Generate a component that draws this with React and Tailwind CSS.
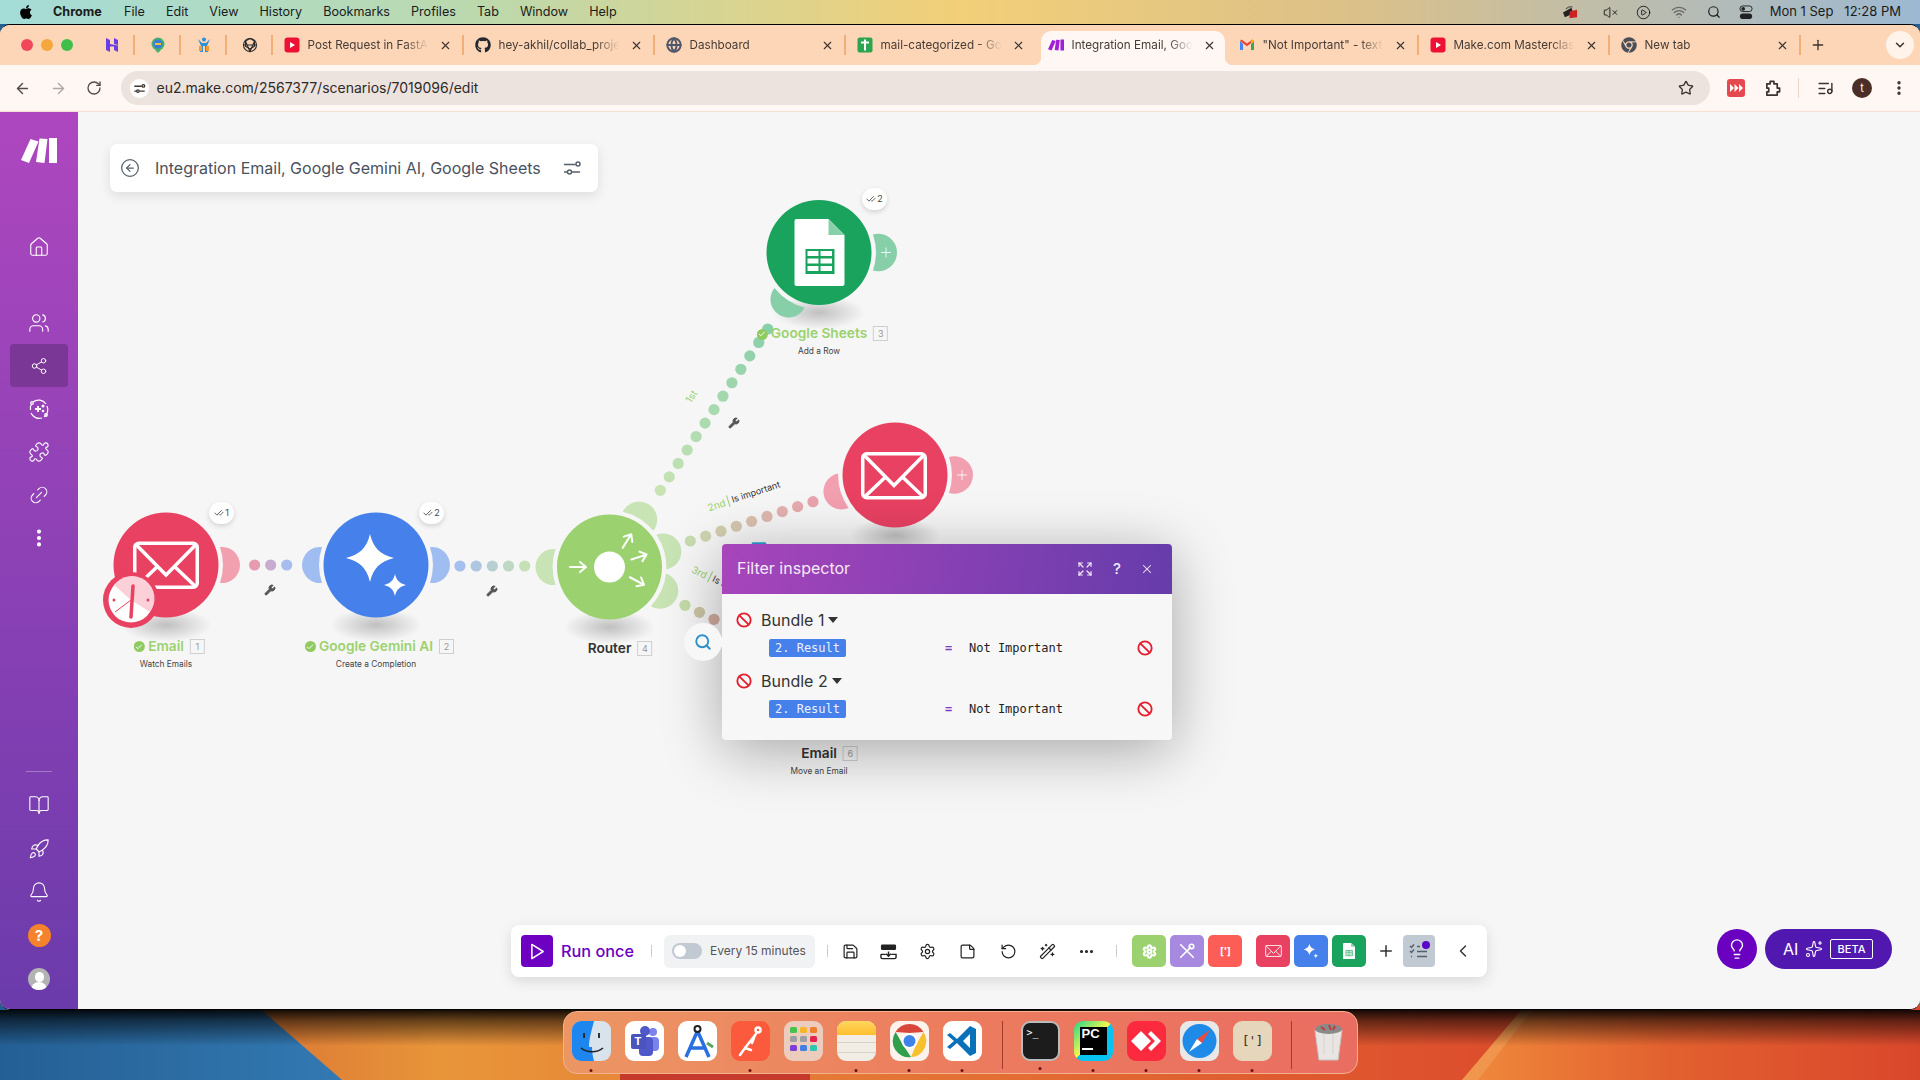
import {
  ArrowLeft, ArrowRight, RotateCw, RotateCcw, Star, Puzzle, ListMusic, EllipsisVertical, X, Plus, ChevronDown, ChevronLeft,
  House, Users, Share2, Link2, BookOpen, Rocket, Bell, CircleArrowLeft, Save, Settings, StickyNote,
  WandSparkles, Ellipsis, Lightbulb, Sparkles, Ban, Search, Expand, CheckCheck, Check, VolumeX, CirclePlay, Wifi,
  Wrench, Funnel, Globe,
} from 'lucide-react';
import { FaApple, FaGithub, FaChrome } from 'react-icons/fa';

const MENU = ['File', 'Edit', 'View', 'History', 'Bookmarks', 'Profiles', 'Tab', 'Window', 'Help'];

function lerp(a, b, t) {
  return a + (b - a) * t;
}

function mix(c1, c2, t) {
  const p = (c, i) => parseInt(c.slice(i, i + 2), 16);
  const ch = (i) => Math.round(lerp(p(c1, i), p(c2, i), t)).toString(16).padStart(2, '0');
  return `#${ch(1)}${ch(3)}${ch(5)}`;
}

/* ---------- small favicons ---------- */

function Yt() {
  return (
    <svg viewBox="0 0 16 16" className="w-4 h-4">
      <rect x="0.5" y="0.5" width="15" height="15" rx="3" fill="#ee1133" />
      <path d="M6 5l5 3-5 3z" fill="#fff" />
    </svg>
  );
}

function SheetFav() {
  return (
    <svg viewBox="0 0 16 16" className="w-4 h-4">
      <rect x="0.5" y="0.5" width="15" height="15" rx="2" fill="#2da44e" />
      <path d="M4 5.5h8M8 2.5v11" stroke="#fff" strokeWidth="2" />
    </svg>
  );
}

function MakeLogo({ className, fill = '#fff' }) {
  return (
    <svg viewBox="0 0 36 25" className={className}>
      <path d="M9.500 1L17.500 3.500 8 25 0 22zM18.500 .5L26.500 1 23.500 25 15 24zM28 0H36V25H28z" fill={fill} />
    </svg>
  );
}

function GmailFav() {
  return (
    <svg viewBox="0 0 16 16" className="w-4 h-4">
      <path d="M1 4v9h3V7z" fill="#4285f4" />
      <path d="M15 4v9h-3V7z" fill="#34a853" />
      <path d="M1 4l7 5.2L15 4l-1.5-1.5L8 6.5 2.5 2.5z" fill="#ea4335" />
      <path d="M12 7l3-3-1.5-1.5L12 4z" fill="#fbbc04" />
    </svg>
  );
}

function TuneIcon({ className, stroke = '#3c332e', width = 1.5 }) {
  return (
    <svg viewBox="0 0 20 20" className={className} fill="none" stroke={stroke} strokeWidth={width}>
      <path d="M2 6.500H13.500M2 14H5" />
      <circle cx="16" cy="6" r="2" />
      <circle cx="7.500" cy="14" r="2" />
      <path d="M10 14H18" />
    </svg>
  );
}

const TABS = [
  { title: 'Post Request in FastAPI', icon: <Yt />, sep: true },
  { title: 'hey-akhil/collab_project', icon: <FaGithub className="w-4 h-4 text-[#24292f]" />, sep: true },
  { title: 'Dashboard', icon: <Globe className="w-4 h-4 text-[#50576a]" strokeWidth={3} />, sep: true },
  { title: 'mail-categorized - Google', icon: <SheetFav />, sep: false },
  { title: 'Integration Email, Google', icon: <MakeLogo className="w-4 h-3" fill="#a020d8" />, sep: false, active: true },
  { title: '"Not Important" - text', icon: <GmailFav />, sep: true },
  { title: 'Make.com Masterclass', icon: <Yt />, sep: true },
  { title: 'New tab', icon: <FaChrome className="w-4 h-4 text-[#4a4f58]" />, sep: true },
];

function BrowserTab({ title, icon, sep, active }) {
  return (
    <div className="relative w-[191px] h-[40px] flex items-center pl-[11px] shrink-0">
      {active && (
        <div className="absolute left-[4px] right-[3px] top-[6px] bottom-0 bg-[#fff7f3] rounded-t-[10px]">
          <div className="absolute -left-[8px] bottom-0 w-2 h-2 bg-[radial-gradient(circle_at_0_0,transparent_8px,#fff7f3_8.5px)]" />
          <div className="absolute -right-[8px] bottom-0 w-2 h-2 bg-[radial-gradient(circle_at_100%_0,transparent_8px,#fff7f3_8.5px)]" />
        </div>
      )}
      <div className="relative w-4 h-4 flex items-center justify-center shrink-0">{icon}</div>
      <div className="relative ml-2 mt-px w-[128px] overflow-hidden whitespace-nowrap text-[11.700px] text-[#463c36] [mask-image:linear-gradient(90deg,#000_76%,transparent_94%)]">
        {title}
      </div>
      <X className="relative ml-[3px] w-[13px] h-[13px] text-[#3c332e] shrink-0" strokeWidth={2} />
      {sep && <div className="absolute right-0 top-[10px] w-[1.5px] h-5 bg-[#f2ae74]" />}
    </div>
  );
}

function MenuBar() {
  return (
    <div className="relative z-10 h-6 shrink-0 flex items-center text-[12.600px] text-[#1b1b1b] bg-[linear-gradient(90deg,#a4dcd8,#bcd9ad_25%,#f2cf78_50%,#dcc188_70%,#9cb8d2)]">
      <FaApple className="ml-[18px] w-[16px] h-[16px] text-black" />
      <span className="ml-[19px] font-bold w-[50px]">Chrome</span>
      <div className="ml-[21px] flex gap-[21px]">
        {MENU.map((m) => (
          <span key={m}>{m}</span>
        ))}
      </div>
      <div className="ml-auto flex items-center pr-[19px]">
        <svg viewBox="0 0 20 16" className="w-[19px] h-[15px] mr-[23px]">
          <path d="M2 8l9-5 2 6-9 4z" fill="#222" />
          <path d="M9 7l8-2v8l-8 1z" fill="#cc2222" />
          <path d="M5 4a8 8 0 0 1 7-2" stroke="#333" fill="none" />
        </svg>
        <VolumeX className="w-[15px] h-[15px] mr-[18px]" strokeWidth={1.5} />
        <CirclePlay className="w-[15px] h-[15px] mr-[20px]" strokeWidth={1.5} />
        <Wifi className="w-[16px] h-[16px] mr-[20px] text-[#666]" strokeWidth={2} />
        <Search className="w-[14px] h-[14px] mr-[18px]" strokeWidth={2} />
        <svg viewBox="0 0 14 16" className="w-[14px] h-[15px] mr-[17px]">
          <rect x="0.5" y="1" width="13" height="6" rx="3" fill="none" stroke="#222" />
          <rect x="0.5" y="9" width="13" height="6" rx="3" fill="#222" />
          <circle cx="4" cy="4" r="2" fill="#222" />
        </svg>
        <span className="whitespace-pre text-[13px]">Mon 1 Sep   12:28 PM</span>
      </div>
    </div>
  );
}

function PinnedTab({ children }) {
  return (
    <div className="relative w-[46px] h-10 flex items-center justify-center shrink-0">
      {children}
      <div className="absolute right-0 top-[10px] w-[1.5px] h-5 bg-[#f2ae74]" />
    </div>
  );
}

function TabStrip() {
  return (
    <div className="h-10 flex bg-[#fdd6b8] relative">
      <div className="w-[88.5px] pl-[21px] flex items-center gap-2 shrink-0">
        <span className="w-3 h-3 rounded-full bg-[#f0485a]" />
        <span className="w-3 h-3 rounded-full bg-[#f6a73c]" />
        <span className="w-3 h-3 rounded-full bg-[#3fbf4a]" />
      </div>
      <PinnedTab>
        <svg viewBox="0 0 16 16" className="w-4 h-4">
          <path d="M2 1l4 2v4h4V1l4 2v5l-4-1-0 0H6l8 1.5V15l-4-2V9.5H6V15l-4-2z" fill="#6b3fe0" />
        </svg>
      </PinnedTab>
      <PinnedTab>
        <svg viewBox="0 0 16 16" className="w-4 h-4">
          <circle cx="8" cy="7" r="6.5" fill="#46b06c" />
          <circle cx="8" cy="7" r="4.5" fill="#3d7bd6" />
          <rect x="5" y="6" width="6" height="2" fill="#f0c040" />
          <path d="M5 13l3 3 3-3z" fill="#46b06c" />
        </svg>
      </PinnedTab>
      <PinnedTab>
        <svg viewBox="0 0 16 16" className="w-4 h-4">
          <circle cx="8" cy="2.5" r="2" fill="#2d8fd5" />
          <path d="M2 2l4 4h4l4-4-3 7 1 6H9V9H7v6H4l1-6z" fill="#2d8fd5" />
          <rect x="3" y="9" width="3" height="5" fill="#f39c32" />
          <rect x="10" y="9" width="3" height="5" fill="#f39c32" />
        </svg>
      </PinnedTab>
      <PinnedTab>
        <svg viewBox="0 0 16 16" className="w-4 h-4" fill="none" stroke="#2a2a2a" strokeWidth="1.1">
          <circle cx="8" cy="8" r="6.5" />
          <path d="M8 1.5l4.5 2.6v5.2L8 12 3.5 9.3V4.1z" />
          <path d="M3.5 4.1L8 14.5l4.5-10.4M1.5 8h13" />
        </svg>
      </PinnedTab>
      {TABS.map((t) => (
        <BrowserTab key={t.title} {...t} />
      ))}
      <Plus className="ml-[9px] mt-[12px] w-4 h-4 text-[#3c332e]" strokeWidth={2} />
      <div className="absolute right-[6px] top-[6px] w-7 h-7 rounded-full bg-[#fff3ea] flex items-center justify-center">
        <ChevronDown className="w-[14px] h-[14px] text-[#3c332e]" strokeWidth={2.5} />
      </div>
    </div>
  );
}

function AddressRow() {
  return (
    <div className="h-[47px] flex items-center bg-[#fff7f3] border-b border-[#f7e0d0]">
      <div className="pl-1 flex shrink-0 text-[#544b46]">
        <div className="w-9 flex justify-center"><ArrowLeft className="w-[17px] h-[17px]" strokeWidth={2} /></div>
        <div className="w-9 flex justify-center"><ArrowRight className="w-[17px] h-[17px] text-[#b0a8a3]" strokeWidth={2} /></div>
        <div className="w-9 flex justify-center"><RotateCw className="w-4 h-4" strokeWidth={2} /></div>
      </div>
      <div className="ml-[8.5px] w-[1589.5px] h-[34px] rounded-full bg-[#ede3de] flex items-center pl-[9px] pr-[16px] shrink-0">
        <div className="w-[19px] h-[19px] rounded-full bg-white flex items-center justify-center">
          <TuneIcon className="w-[13px] h-[13px]" width={2} />
        </div>
        <span className="ml-2 -mt-[2px] text-[14px] text-[#2e2a28]">eu2.make.com/2567377/scenarios/7019096/edit</span>
        <Star className="ml-auto w-4 h-4 text-[#3c332e]" strokeWidth={2} />
      </div>
      <div className="flex items-center ml-[7px] text-[#3c332e]">
        <div className="w-[37px] flex justify-center">
          <svg viewBox="0 0 18 18" className="w-[18px] h-[18px]">
            <rect width="18" height="18" rx="3" fill="#e5484d" />
            <path d="M3 5l4 4-4 4zM7.5 5l4 4-4 4zM12 5l4 4-4 4z" fill="#fff" />
          </svg>
        </div>
        <div className="w-[36px] flex justify-center">
          <svg viewBox="0 0 18 18" className="w-[17px] h-[17px]" fill="none" stroke="currentColor" strokeWidth="1.800" strokeLinejoin="round">
            <path d="M3 4h3.500V1.500h4V4H14v4.500h2.500v4H14V16H3v-3.500h2v-4H3z" />
          </svg>
        </div>
        <div className="w-px h-5 bg-[#ead8cc] mx-[8px]" />
        <div className="w-[36px] flex justify-center"><ListMusic className="w-[17px] h-[17px]" strokeWidth={2} /></div>
        <div className="w-[20px] h-[20px] ml-[9px] rounded-full bg-[#4b2e26] text-white text-[11px] flex items-center justify-center">t</div>
        <div className="ml-[17px] w-5 flex justify-center"><EllipsisVertical className="w-[18px] h-[18px]" strokeWidth={2.5} /></div>
      </div>
    </div>
  );
}

/* ---------- sidebar ---------- */

function SideSlot({ children, active, tall }) {
  return (
    <div className={`w-[58px] flex items-center justify-center rounded-[4px] text-white ${tall ? 'h-[43.500px]' : 'h-[43px]'} ${active ? 'bg-[#7a3795]' : ''}`}>
      {children}
    </div>
  );
}

function Sidebar() {
  const ic = 'w-[22px] h-[22px]';
  return (
    <div className="w-[78px] shrink-0 flex flex-col items-center bg-[linear-gradient(180deg,#ae47bf,#6b3bab)] pt-[26px] pb-[8px]">
      <MakeLogo className="w-[36px] h-[25px] mb-[62px]" />
      <SideSlot><House className={ic} strokeWidth={1.2} /></SideSlot>
      <div className="h-[33px]" />
      <SideSlot><Users className={ic} strokeWidth={1.2} /></SideSlot>
      <SideSlot active><Share2 className="w-[18px] h-[18px]" strokeWidth={1.3} /></SideSlot>
      <SideSlot>
        <svg viewBox="0 0 22 22" className={ic} fill="none" stroke="#fff" strokeWidth="1.2">
          <path d="M5 4a9 9 0 0 1 13 2M19 8a9 9 0 0 1-3 11M14 20a9 9 0 0 1-11-5M2.500 12a9 9 0 0 1 1-6" />
          <circle cx="4" cy="5" r="1.300" />
          <circle cx="18" cy="17" r="1.300" />
          <path d="M10 8v6M7 11h6" strokeWidth="1.800" />
          <circle cx="15" cy="8" r="0.900" fill="#fff" />
          <circle cx="15" cy="13" r="0.700" fill="#fff" />
        </svg>
      </SideSlot>
      <SideSlot><Puzzle className={ic} strokeWidth={1.2} /></SideSlot>
      <SideSlot><Link2 className={`${ic} -rotate-45`} strokeWidth={1.2} /></SideSlot>
      <SideSlot><EllipsisVertical className={ic} strokeWidth={2.5} /></SideSlot>

      <div className="mt-auto w-[26px] h-px bg-white/30 mb-[12px]" />
      <SideSlot tall><BookOpen className={ic} strokeWidth={1.2} /></SideSlot>
      <SideSlot tall><Rocket className={ic} strokeWidth={1.2} /></SideSlot>
      <SideSlot tall><Bell className={ic} strokeWidth={1.2} /></SideSlot>
      <SideSlot tall>
        <div className="w-[23px] h-[23px] rounded-full bg-[#f5822c] flex items-center justify-center text-white text-[15px] font-bold">?</div>
      </SideSlot>
      <SideSlot tall>
        <div className="w-[22px] h-[22px] rounded-full bg-[#b3b3b3] overflow-hidden flex flex-col items-center">
          <div className="w-[9px] h-[10px] rounded-full bg-white mt-[4px]" />
          <div className="w-[16px] h-[8px] rounded-t-full bg-white" />
        </div>
      </SideSlot>
    </div>
  );
}

/* ---------- scenario diagram ---------- */

const RED = '#e84162';
const BLUE = '#4680ea';
const GREEN = '#9bd26f';
const SHEET = '#19a35d';

function Handle({ cx, cy, angle, color, plus }) {
  const r = plus ? 18.750 : 18.100;
  const d = `M54 -18 A${r} ${r} 0 1 1 54 18 A57 57 0 0 0 54 -18 Z`;
  return (
    <g transform={`translate(${cx} ${cy}) rotate(${angle})`}>
      <path d={d} fill={color} />
      {plus && <path d="M62 0h10M67 -5v10" stroke="#fff" strokeWidth="1" strokeOpacity="0.85" />}
    </g>
  );
}

function Dots({ x1, y1, x2, y2, n, c1, c2 }) {
  const out = [];
  for (let i = 0; i < n; i++) {
    const t = i / (n - 1);
    out.push(<circle key={i} cx={lerp(x1, x2, t)} cy={lerp(y1, y2, t)} r="5.600" fill={mix(c1, c2, t)} />);
  }
  return <g>{out}</g>;
}

function NodeShadow({ cx, cy }) {
  return <ellipse cx={cx} cy={cy + 60} rx="46" ry="17" fill="url(#nodeShadow)" />;
}

function MailGlyph({ x, y, w = 66 }) {
  const s = w / 66;
  return (
    <g transform={`translate(${x} ${y}) scale(${s})`} fill="none" stroke="#fff" strokeWidth="3.500">
      <rect x="1.750" y="1.750" width="62.500" height="44" rx="4" />
      <path d="M3 3l30 30.500L63 3M3.500 45l21-20M62.500 45l-21-20" />
    </g>
  );
}

function StarShape({ x, y, h }) {
  return (
    <path
      transform={`translate(${x} ${y}) scale(${h})`}
      d="M0 -1C.14 -.42 .42 -.14 1 0 .42 .14 .14 .42 0 1 -.14 .42 -.42 .14 -1 0 -.42 -.14 -.14 -.42 0 -1Z"
      fill="#fff"
    />
  );
}

function SheetGlyph({ x, y, s = 1, ink = SHEET }) {
  return (
    <g transform={`translate(${x} ${y}) scale(${s})`}>
      <path d="M2 0H34L50 16V65a2 2 0 0 1-2 2H2a2 2 0 0 1-2-2V2a2 2 0 0 1 2-2Z" fill="#fff" />
      <path d="M34 0L50 16H34Z" fill="#88d0aa" />
      <rect x="11" y="30" width="29" height="25" fill={ink} />
      <path d="M13 32h11v5H13zM26 32h11.500v5H26zM13 39.500h11v5H13zM26 39.500h11.500v5H26zM13 47h11v5H13zM26 47h11.500v5H26z" fill="#fff" />
    </g>
  );
}

function RouterArrow({ x, y, a }) {
  return (
    <g transform={`translate(${x} ${y}) rotate(${a})`} fill="none" stroke="#fff" strokeWidth="2" strokeLinecap="round" strokeLinejoin="round">
      <path d="M-8 0H7M2 -5l6 5-6 5" />
    </g>
  );
}

function Diagram() {
  return (
    <svg viewBox="78 112 1842 897" className="absolute inset-0 w-[1842px] h-[897px]">
      <defs>
        <radialGradient id="nodeShadow">
          <stop offset="0" stopColor="#000" stopOpacity="0.22" />
          <stop offset="1" stopColor="#000" stopOpacity="0" />
        </radialGradient>
      </defs>

      <Dots x1={254.6} y1={565} x2={286.7} y2={565} n={3} c1="#e79bb0" c2="#a7bdee" />
      <Dots x1={460} y1={566} x2={524.7} y2={566} n={5} c1="#a5bfef" c2="#c6e0b5" />
      <Dots x1={660.3} y1={490.3} x2={767.7} y2={329} n={13} c1="#c8e3b4" c2="#88d0aa" />
      <Dots x1={690.3} y1={541} x2={813} y2={501.7} n={9} c1="#c9dcae" c2="#e9a3ae" />
      <Dots x1={685} y1={605.3} x2={714} y2={619.3} n={3} c1="#c5dda9" c2="#d2ad9f" />

      {[[166, 565], [376, 565], [609.5, 567], [819, 252.5], [895, 475]].map(([x, y]) => (
        <NodeShadow key={x} cx={x} cy={y} />
      ))}

      <Handle cx={166} cy={565} angle={0} color="#f29fb0" />
      <Handle cx={376} cy={565} angle={180} color="#a0bdf1" />
      <Handle cx={376} cy={565} angle={0} color="#a0bdf1" />
      <Handle cx={609.5} cy={567} angle={180} color="#c8e3b4" />
      <Handle cx={609.5} cy={567} angle={-58} color="#c8e3b4" />
      <Handle cx={609.5} cy={567} angle={-16} color="#c8e3b4" />
      <Handle cx={609.5} cy={567} angle={25} color="#c8e3b4" />
      <Handle cx={819} cy={252.5} angle={123} color="#86cfa9" />
      <Handle cx={819} cy={252.5} angle={0} color="#86cfa9" plus />
      <Handle cx={895} cy={475} angle={163} color="#f29fb0" />
      <Handle cx={895} cy={475} angle={0} color="#f29fb0" plus />

      <circle cx="166" cy="565" r="52.500" fill={RED} />
      <MailGlyph x={133} y={541.5} />

      <circle cx="376" cy="565" r="52.500" fill={BLUE} />
      <StarShape x={370} y={558} h={24} />
      <StarShape x={395} y={585} h={11} />

      <circle cx="609.500" cy="567" r="52.500" fill={GREEN} />
      <circle cx="609.500" cy="567" r="15.500" fill="#fff" />
      <RouterArrow x={578} y={567} a={0} />
      <RouterArrow x={627} y={541} a={-58} />
      <RouterArrow x={639} y={557} a={-18} />
      <RouterArrow x={637} y={581} a={28} />

      <circle cx="819" cy="252.500" r="52.500" fill={SHEET} />
      <SheetGlyph x={794.5} y={219} />

      <circle cx="895" cy="475" r="52.500" fill={RED} />
      <MailGlyph x={861} y={452} />

      <circle cx="131" cy="600" r="28" fill={RED} />
      <circle cx="131" cy="600" r="22.500" fill="#fff" />
      <path d="M131 600L114 585A22.500 22.500 0 0 1 150 612Z" fill="#fbd0d8" />
      <path d="M133 586L131 617" stroke={RED} strokeWidth="3.500" strokeLinecap="round" />
      <path d="M131 600L115 612" stroke={RED} strokeWidth="1" />
      <circle cx="114" cy="600" r="1.500" fill={RED} />
      <circle cx="148" cy="600" r="1.500" fill={RED} />
    </svg>
  );
}

function NodeLabel({ name, num, sub, ok, className }) {
  return (
    <div className={`absolute -translate-x-1/2 flex flex-col items-center ${className}`}>
      <div className={`relative w-max text-[13.700px] leading-[17px] font-semibold ${ok ? 'text-[#9bd26f]' : 'text-[#333]'}`}>
        {ok && (
          <span className="absolute right-full mr-[3.500px] top-[3.500px] w-[11px] h-[11px] rounded-full bg-[#8fcb60] flex items-center justify-center">
            <Check className="w-[8px] h-[8px] text-white" strokeWidth={3} />
          </span>
        )}
        {name}
        <span className="absolute left-full ml-[6px] top-[1px] w-[15px] h-[15px] border border-[#cfcfcf] text-[#999] text-[9px] leading-[13px] font-normal text-center">
          {num}
        </span>
      </div>
      {sub && <div className="mt-[3px] text-[8.300px] leading-[12px] text-[#444] whitespace-nowrap">{sub}</div>}
    </div>
  );
}

function ExecBadge({ n, className }) {
  return (
    <div className={`absolute w-[25px] h-[22px] rounded-full bg-white shadow-[0_2px_5px_rgba(0,0,0,0.15)] flex items-center justify-center gap-[1px] text-[9px] text-[#444] ${className}`}>
      <CheckCheck className="w-[10px] h-[10px]" strokeWidth={2} />
      {n}
    </div>
  );
}

function ScenarioTitle() {
  return (
    <div className="absolute left-[32px] top-[32px] w-[488px] h-[48px] rounded-[7px] bg-white shadow-[0_4px_12px_rgba(0,0,0,0.1)] flex items-center pl-[10px] pr-[16px]">
      <CircleArrowLeft className="w-[20px] h-[20px] text-[#56606d]" strokeWidth={1.500} />
      <span className="ml-[15px] text-[16px] text-[#4a5160] whitespace-nowrap">Integration Email, Google Gemini AI, Google Sheets</span>
      <TuneIcon className="ml-auto w-[20px] h-[20px]" stroke="#56606d" />
    </div>
  );
}

function FilterInspector() {
  const bundles = ['Bundle 1', 'Bundle 2'];
  return (
    <div className="absolute left-[644px] top-[432px] w-[450px] h-[196px] rounded-[4px] bg-[#f7f7f7] overflow-hidden shadow-[0_10px_60px_rgba(0,0,0,0.33)] flex flex-col">
      <div className="h-[50px] shrink-0 flex items-center pl-[15px] bg-[linear-gradient(100deg,#a845bb,#663cab)] text-[#f5eaf8]">
        <span className="-mt-[2px] text-[16px]">Filter inspector</span>
        <Expand className="ml-auto w-[16px] h-[16px]" strokeWidth={1.8} />
        <span className="ml-[17px] w-[14px] text-center text-[15px] font-medium">?</span>
        <X className="ml-[16px] mr-[18px] w-[14px] h-[14px]" strokeWidth={1.8} />
      </div>
      <div className="pt-[15px]">
        {bundles.map((b) => (
          <div key={b} className="mb-[13px]">
            <div className="h-[22px] pl-[14px] flex items-center text-[16px] text-[#333]">
              <Ban className="w-4 h-4 text-[#e51f2d]" strokeWidth={2.8} />
              <span className="ml-[9px]">{b}</span>
              <span className="ml-[4px] w-0 h-0 border-x-[5px] border-x-transparent border-t-[6px] border-t-[#333]" />
            </div>
            <div className="mt-[8px] h-[18px] pl-[47px] pr-[19px] flex items-center font-['DejaVu_Sans_Mono',monospace] text-[12px]">
              <span className="w-[77px] h-[18px] rounded-[2px] bg-[#4680ea] text-[#eaf1ff] text-center leading-[18px]">2. Result</span>
              <span className="ml-[99px] w-[8px] text-[#7c3ac5] font-bold">=</span>
              <span className="ml-[16px] text-[#222]">Not Important</span>
              <Ban className="ml-auto w-4 h-4 text-[#e51f2d]" strokeWidth={2.8} />
            </div>
          </div>
        ))}
      </div>
    </div>
  );
}

/* ---------- bottom toolbar ---------- */

function ToolSlot({ children }) {
  return <div className="w-[39.350px] flex justify-center text-[#222]">{children}</div>;
}

function ModuleBtn({ color, children, className = '' }) {
  return (
    <div className={`w-[34px] h-[32px] rounded-[5px] flex items-center justify-center shrink-0 ${color} ${className}`}>
      {children}
    </div>
  );
}

function BottomBar() {
  const ic = 'w-[17px] h-[17px]';
  return (
    <div className="absolute left-[433px] top-[813px] w-[976px] h-[52px] rounded-[8px] bg-white shadow-[0_4px_14px_rgba(0,0,0,0.12)] flex items-center pl-[10px]">
      <div className="w-8 h-8 rounded-[4px] bg-[#6d00c1] flex items-center justify-center shrink-0">
        <svg viewBox="0 0 16 18" className="w-[15px] h-[17px]" fill="none" stroke="#fff" strokeWidth="1.600" strokeLinejoin="round">
          <path d="M2 1.500L14 9 2 16.500Z" />
        </svg>
      </div>
      <span className="ml-2 w-[72px] text-[16.300px] font-medium text-[#6d00c1] whitespace-nowrap">Run once</span>
      <div className="ml-[18px] w-px h-3 bg-[#ccc]" />
      <div className="ml-[12px] w-[151px] h-[33px] rounded-[6px] bg-[#f1f2f4] flex items-center pl-[8px] shrink-0">
        <div className="w-[30px] h-[16px] rounded-full bg-[#c1c9d2] p-[2px]">
          <div className="w-[12px] h-[12px] rounded-full bg-white" />
        </div>
        <span className="ml-[8px] text-[12px] text-[#555] whitespace-nowrap">Every 15 minutes</span>
      </div>
      <div className="ml-[12px] w-px h-3 bg-[#ccc]" />
      <div className="ml-[3px] flex">
        <ToolSlot><Save className={ic} strokeWidth={1.700} /></ToolSlot>
        <ToolSlot>
          <svg viewBox="0 0 18 18" className={`${ic} -ml-[4px]`}>
            <rect x="1" y="1.500" width="16" height="6" rx="1.500" fill="#222" />
            <path d="M1 12v3a1.500 1.500 0 0 0 1.500 1.500h13A1.500 1.500 0 0 0 17 15v-3h-5M6 12H1M9 9v5M6.500 11.500L9 14l2.500-2.500" fill="none" stroke="#222" strokeWidth="1.500" />
          </svg>
        </ToolSlot>
        <ToolSlot><Settings className={`${ic} -ml-[3px]`} strokeWidth={1.700} /></ToolSlot>
        <ToolSlot><StickyNote className={`${ic} -ml-[3px]`} strokeWidth={1.700} /></ToolSlot>
        <ToolSlot><RotateCcw className={ic} strokeWidth={1.700} /></ToolSlot>
        <ToolSlot><WandSparkles className={ic} strokeWidth={1.700} /></ToolSlot>
        <ToolSlot><Ellipsis className={ic} strokeWidth={2.500} /></ToolSlot>
      </div>
      <div className="ml-[10px] w-px h-3 bg-[#ccc]" />
      <div className="ml-[15px] flex gap-1">
        <ModuleBtn color="bg-[#9bd26f]"><Settings className="w-[15px] h-[15px] text-white" strokeWidth={3.500} /></ModuleBtn>
        <ModuleBtn color="bg-[#a78ae0]">
          <svg viewBox="0 0 20 20" className="w-[18px] h-[18px]" fill="none" stroke="#fff" strokeWidth="1.800" strokeLinecap="round">
            <path d="M3 17L14 6M3 3l14 14" />
            <circle cx="15" cy="5" r="2.500" />
          </svg>
        </ModuleBtn>
        <ModuleBtn color="bg-[#fc5e57]"><span className="text-[10px] font-bold text-white">[']</span></ModuleBtn>
      </div>
      <div className="ml-[14px] flex gap-1">
        <ModuleBtn color="bg-[#e84162]">
          <svg viewBox="0 0 66 48" className="w-[17px] h-[12px]"><MailGlyph x={0} y={0} /></svg>
        </ModuleBtn>
        <ModuleBtn color="bg-[#4680ea]">
          <svg viewBox="0 0 20 20" className="w-[16px] h-[16px]">
            <StarShape x={8} y={8} h={7} />
            <StarShape x={16} y={16} h={3} />
          </svg>
        </ModuleBtn>
        <ModuleBtn color="bg-[#19a35d]">
          <svg viewBox="0 0 50 67" className="w-[12px] h-[16px]"><SheetGlyph x={0} y={0} /></svg>
        </ModuleBtn>
      </div>
      <Plus className="ml-[11px] w-[18px] h-[18px] text-[#333]" strokeWidth={2} />
      <div className="ml-[8px] w-[32px] h-[32px] rounded-[4px] bg-[#c1c9d2] relative flex items-center justify-center">
        <svg viewBox="0 0 20 16" className="w-[20px] h-[16px]" fill="none" stroke="#55606c" strokeWidth="1.500">
          <path d="M1 3l1.500 1.500L5 1.500M1 8l1.500 1.500L5 6.500M2 13.500h1M8 3.500h3M8 8.500h10M8 13.500h10" />
        </svg>
        <span className="absolute right-[5px] top-[6px] w-[8px] h-[8px] rounded-full bg-[#5a08c8]" />
      </div>
      <ChevronLeft className="ml-[18px] w-[20px] h-[20px] text-[#333]" strokeWidth={1.700} />
    </div>
  );
}

function AiButtons() {
  return (
    <div className="absolute left-[1639px] top-[817px] flex gap-2">
      <div className="w-10 h-10 rounded-full bg-[#6a00c0] flex items-center justify-center">
        <Lightbulb className="w-[22px] h-[22px] text-white" strokeWidth={1.500} />
      </div>
      <div className="w-[127px] h-10 rounded-full bg-[#5118b0] flex items-center pl-[18px] text-white">
        <span className="text-[16px] w-[16px]">AI</span>
        <Sparkles className="ml-[6px] w-[18px] h-[18px]" strokeWidth={1.500} />
        <span className="ml-[7px] w-[43px] h-[20px] rounded-[2px] border border-white text-[11px] leading-[18px] font-medium text-center">BETA</span>
      </div>
    </div>
  );
}

function Canvas() {
  return (
    <div className="relative flex-1 bg-[#f6f6f6] overflow-hidden">
      <Diagram />
      <ScenarioTitle />

      <NodeLabel className="left-[88px] top-[525.500px]" ok name="Email" num="1" sub="Watch Emails" />
      <NodeLabel className="left-[298px] top-[525.500px]" ok name="Google Gemini AI" num="2" sub="Create a Completion" />
      <NodeLabel className="left-[531.500px] top-[528px]" name="Router" num="4" />
      <NodeLabel className="left-[741px] top-[213px]" ok name="Google Sheets" num="3" sub="Add a Row" />
      <NodeLabel className="left-[741px] top-[633px]" name="Email" num="6" sub="Move an Email" />

      <ExecBadge n="1" className="left-[131px] top-[390px]" />
      <ExecBadge n="2" className="left-[341px] top-[390px]" />
      <ExecBadge n="2" className="left-[784px] top-[76px]" />

      <Wrench className="absolute left-[186px] top-[472px] w-3 h-3 fill-[#555] text-[#555]" />
      <Wrench className="absolute left-[408px] top-[473px] w-3 h-3 fill-[#555] text-[#555]" />
      <Wrench className="absolute left-[650px] top-[305px] w-3 h-3 fill-[#555] text-[#555]" />

      <span className="absolute left-[607px] top-[277px] -rotate-[56deg] text-[10px] text-[#9bd26f]">1st</span>
      <div className="absolute left-[628px] top-[378px] w-max -rotate-[18deg] flex items-center gap-[3px] text-[9px] leading-[12px]">
        <span className="text-[#9bd26f] text-[10px]">2nd</span>
        <span className="w-px h-3 bg-[#9bd26f]" />
        <span className="text-[#333]">Is important</span>
      </div>
      <div className="absolute left-[610px] top-[470px] w-max rotate-[26deg] flex items-center gap-[3px] text-[9px] leading-[12px]">
        <span className="text-[#9bd26f] text-[10px]">3rd</span>
        <span className="w-px h-3 bg-[#9bd26f]" />
        <span className="text-[#333]">Is not important</span>
      </div>

      <div className="absolute left-[662px] top-[425px] w-[38px] h-[38px] rounded-full bg-[#f7f7f7] flex items-start justify-center pt-[4px]">
        <Funnel className="w-[16px] h-[16px] fill-[#2f9fd0] text-[#2f9fd0]" />
      </div>

      <FilterInspector />

      <div className="absolute left-[606px] top-[511px] w-[38px] h-[38px] rounded-full bg-[#f7f7f7] flex items-center justify-center">
        <div className="absolute -right-[2px] top-[13px] w-[12px] h-[12px] rotate-45 bg-[#f7f7f7]" />
        <Search className="relative w-[18px] h-[18px] text-[#2f8fc9]" strokeWidth={2.500} />
      </div>

      <BottomBar />
      <AiButtons />
    </div>
  );
}

/* ---------- desktop ---------- */

function Wallpaper() {
  return (
    <svg viewBox="0 1000 1920 80" preserveAspectRatio="none" className="absolute left-0 bottom-0 w-[1920px] h-[80px]">
      <defs>
        <linearGradient id="wpMid" x1="0" x2="1" y1="0" y2="0">
          <stop offset="0" stopColor="#c9502c" />
          <stop offset="0.230" stopColor="#e8953a" />
          <stop offset="0.550" stopColor="#e26a32" />
          <stop offset="0.800" stopColor="#dc4a2c" />
          <stop offset="1" stopColor="#e0452a" />
        </linearGradient>
        <linearGradient id="wpBlue" x1="0" x2="1" y1="0" y2="0">
          <stop offset="0" stopColor="#245f94" />
          <stop offset="1" stopColor="#3379b2" />
        </linearGradient>
        <linearGradient id="wpRight" x1="0" x2="1" y1="0" y2="0">
          <stop offset="0" stopColor="#f08a3c" />
          <stop offset="0.450" stopColor="#e2602f" />
          <stop offset="1" stopColor="#d9472b" />
        </linearGradient>
        <linearGradient id="wpShade" x1="0" x2="0" y1="0" y2="1">
          <stop offset="0" stopColor="#000" stopOpacity="0.900" />
          <stop offset="0.300" stopColor="#000" stopOpacity="0.550" />
          <stop offset="1" stopColor="#000" stopOpacity="0" />
        </linearGradient>
      </defs>
      <rect x="0" y="1000" width="1920" height="80" fill="url(#wpMid)" />
      <path d="M0 1000H250L342 1080H0Z" fill="url(#wpBlue)" />
      <path d="M1530 1000H1920V1080H1462Z" fill="url(#wpRight)" />
      <path d="M1530 1000L1462 1080H1478L1540 1000Z" fill="#f2a05a" fillOpacity="0.600" />
      <rect x="620" y="1070" width="190" height="10" fill="#c53a2a" />
      <rect x="0" y="1010" width="1920" height="36" fill="url(#wpShade)" />
    </svg>
  );
}

function DockIcon({ children, running, className = '' }) {
  return (
    <div className={`relative w-[39px] h-[40px] rounded-[9px] shrink-0 ${className}`}>
      {children}
      {running && <span className="absolute -bottom-[11px] left-1/2 -translate-x-1/2 w-[3px] h-[3px] rounded-full bg-[#6b1010]" />}
    </div>
  );
}

function Dock() {
  return (
    <div className="relative z-10 mt-px mx-auto w-[795px] h-[63px] rounded-[14px] border border-[#f3b28f] bg-[linear-gradient(90deg,#ec9663,#ec7c5e_50%,#ea6d62)] flex items-start pt-[9px] pl-[8px]">
      <div className="flex gap-[14px]">
        <DockIcon running>
          <svg viewBox="0 0 39 40" className="w-[39px] h-[40px]">
            <rect width="39" height="40" rx="9" fill="#d8e3ec" />
            <path d="M9 0H22C19 12 17 18 17 26H20C20 32 21 36 22 40H9A9 9 0 0 1 0 31V9A9 9 0 0 1 9 0Z" fill="#1d86ef" />
            <path d="M12 12v5M27 12v5" stroke="#222" strokeWidth="1.800" />
            <path d="M9 27c6 5 16 5 22 0" stroke="#222" strokeWidth="1.500" fill="none" />
          </svg>
        </DockIcon>
        <DockIcon className="bg-white">
          <svg viewBox="0 0 39 40" className="w-[39px] h-[40px]">
            <circle cx="28" cy="11" r="4" fill="#7b83eb" />
            <rect x="24" y="16" width="10" height="14" rx="4" fill="#7b83eb" />
            <circle cx="20" cy="10" r="5" fill="#5059c9" />
            <rect x="14" y="16" width="14" height="19" rx="4" fill="#5059c9" />
            <rect x="6" y="13" width="15" height="15" rx="2" fill="#4b53bc" />
          </svg>
          <span className="absolute left-[6px] top-[13px] w-[15px] h-[15px] text-center text-white text-[11px] leading-[15px] font-bold">T</span>
        </DockIcon>
        <DockIcon className="bg-white">
          <svg viewBox="0 0 39 40" className="w-[39px] h-[40px]" fill="none" stroke="#2a6fe0" strokeWidth="3.500">
            <path d="M19.500 10L8 36M19.500 10L31 36M11 27H28" />
            <circle cx="19.500" cy="8" r="3" stroke="#222" strokeWidth="2" />
            <path d="M29 22l6 4" stroke="#5aa55a" strokeWidth="3" />
          </svg>
        </DockIcon>
        <DockIcon running className="bg-[#fb5a3c]">
          <svg viewBox="0 0 39 40" className="w-[39px] h-[40px]" fill="none" stroke="#fff" strokeWidth="2.500" strokeLinecap="round">
            <circle cx="27" cy="9" r="2.500" />
            <path d="M25 13L14 27 9 34M14 27l6 2M24 14l-3 8" />
          </svg>
        </DockIcon>
        <DockIcon className="bg-[#ecccbc] p-[6px]">
          <div className="grid grid-cols-3 gap-[3px]">
            <span className="h-[6px] rounded-[1.500px] bg-[#46c24f]" />
            <span className="h-[6px] rounded-[1.500px] bg-[#f6b52a]" />
            <span className="h-[6px] rounded-[1.500px] bg-[#ef7f2c]" />
            <span className="h-[6px] rounded-[1.500px] bg-[#9aa0a6]" />
            <span className="h-[6px] rounded-[1.500px] bg-[#9aa0a6]" />
            <span className="h-[6px] rounded-[1.500px] bg-[#e5244d]" />
            <span className="h-[6px] rounded-[1.500px] bg-[#7c3fd6]" />
            <span className="h-[6px] rounded-[1.500px] bg-[#3f7fe6]" />
            <span className="h-[6px] rounded-[1.500px] bg-[#2ec4b6]" />
          </div>
        </DockIcon>
        <DockIcon running className="bg-[#f1ede4]">
          <div className="h-[14px] rounded-t-[9px] bg-[linear-gradient(180deg,#ffd75e,#fdbe2f)]" />
          <div className="mt-[7px] h-px bg-[#d8d3c8]" />
          <div className="mt-[9px] h-px bg-[#d8d3c8]" />
        </DockIcon>
        <DockIcon running className="bg-[#fbf3ec]">
          <svg viewBox="0 0 39 40" className="w-[39px] h-[40px]">
            <path d="M5.600 11A16 16 0 0 1 33.400 11L19.500 12Z" fill="#d9463a" />
            <path d="M33.400 11A16 16 0 0 1 21 36L26 24Z" fill="#f6c12d" />
            <path d="M21 36A16 16 0 0 1 5.600 11L13 24Z" fill="#2f9e4d" />
            <circle cx="19.500" cy="20" r="8" fill="#fff" />
            <circle cx="19.500" cy="20" r="6" fill="#3f83ea" />
          </svg>
        </DockIcon>
        <DockIcon running className="bg-white">
          <svg viewBox="0 0 39 40" className="w-[39px] h-[40px]" fill="#0a70b8">
            <path d="M27 5L33 8V32L27 35 14 22 7 28 4 26 11 20 4 14 7 12 14 18zM27 13L20 20 27 27z" />
          </svg>
        </DockIcon>
      </div>
      <div className="ml-[20px] w-px h-[48px] bg-[#a33a2a]" />
      <div className="ml-[18px] flex gap-[14px]">
        <DockIcon running className="bg-[#1c1c1c] border-2 border-[#bbb] text-white text-[10px] leading-[12px] pl-[4px] pt-[4px] font-['DejaVu_Sans_Mono',monospace]">&gt;_</DockIcon>
        <DockIcon running className="bg-[linear-gradient(135deg,#21d789,#fcf84a_50%,#07c3f2_50%)] p-[6px]">
          <div className="w-full h-full bg-black text-white text-[13px] leading-[14px] pl-[2px] font-semibold font-['Liberation_Sans',sans-serif]">
            PC
            <div className="w-[11px] h-[2px] bg-white mt-[7px]" />
          </div>
        </DockIcon>
        <DockIcon running className="bg-[#fc2a3f]">
          <svg viewBox="0 0 39 40" className="w-[39px] h-[40px]" fill="#fff">
            <path d="M14 10L24 20 14 30 4 20zM24 10L34 20 24 30 21 27 28 20 21 13z" />
          </svg>
        </DockIcon>
        <DockIcon running>
          <svg viewBox="0 0 39 40" className="w-[39px] h-[40px]">
            <rect width="39" height="40" rx="9" fill="#e8e8e8" />
            <circle cx="19.500" cy="20" r="17" fill="#1f8be8" />
            <path d="M30 9L17 18 22 22z" fill="#f04a3c" />
            <path d="M9 31L17 18 22 22z" fill="#fff" />
          </svg>
        </DockIcon>
        <DockIcon running className="bg-[#e6d6bb] flex items-center justify-center text-[#3a3226] text-[13px] font-['DejaVu_Sans_Mono',monospace] tracking-[-1px]">
          [']
        </DockIcon>
      </div>
      <div className="ml-[19.500px] w-px h-[48px] bg-[#a33a2a]" />
      <div className="ml-[17px]">
        <DockIcon>
          <svg viewBox="0 0 39 40" className="w-[39px] h-[42px]">
            <path d="M6 8H33L29 38H10Z" fill="#e8e5e3" stroke="#c9c6c4" />
            <ellipse cx="19.500" cy="7" rx="13.500" ry="5" fill="#8a8a8a" />
            <path d="M12 5l4 3M20 3l2 5M26 4l-2 4" stroke="#c23b3b" strokeWidth="2" />
            <path d="M15 12v20M24 12v20" stroke="#d4d1cf" />
          </svg>
        </DockIcon>
      </div>
    </div>
  );
}

export default function App() {
  return (
    <div className="relative w-[1920px] h-[1080px] overflow-hidden flex flex-col font-['Inter',sans-serif] bg-[#245f94]">
      <MenuBar />
      <div className="relative flex-1 flex flex-col">
        <Wallpaper />
        <div className="relative z-10 h-[986px] shrink-0 rounded-[10px] overflow-hidden border-y border-black bg-[#fff7f3] flex flex-col">
          <TabStrip />
          <AddressRow />
          <div className="flex-1 min-h-0 flex">
            <Sidebar />
            <Canvas />
          </div>
        </div>
        <Dock />
      </div>
    </div>
  );
}
